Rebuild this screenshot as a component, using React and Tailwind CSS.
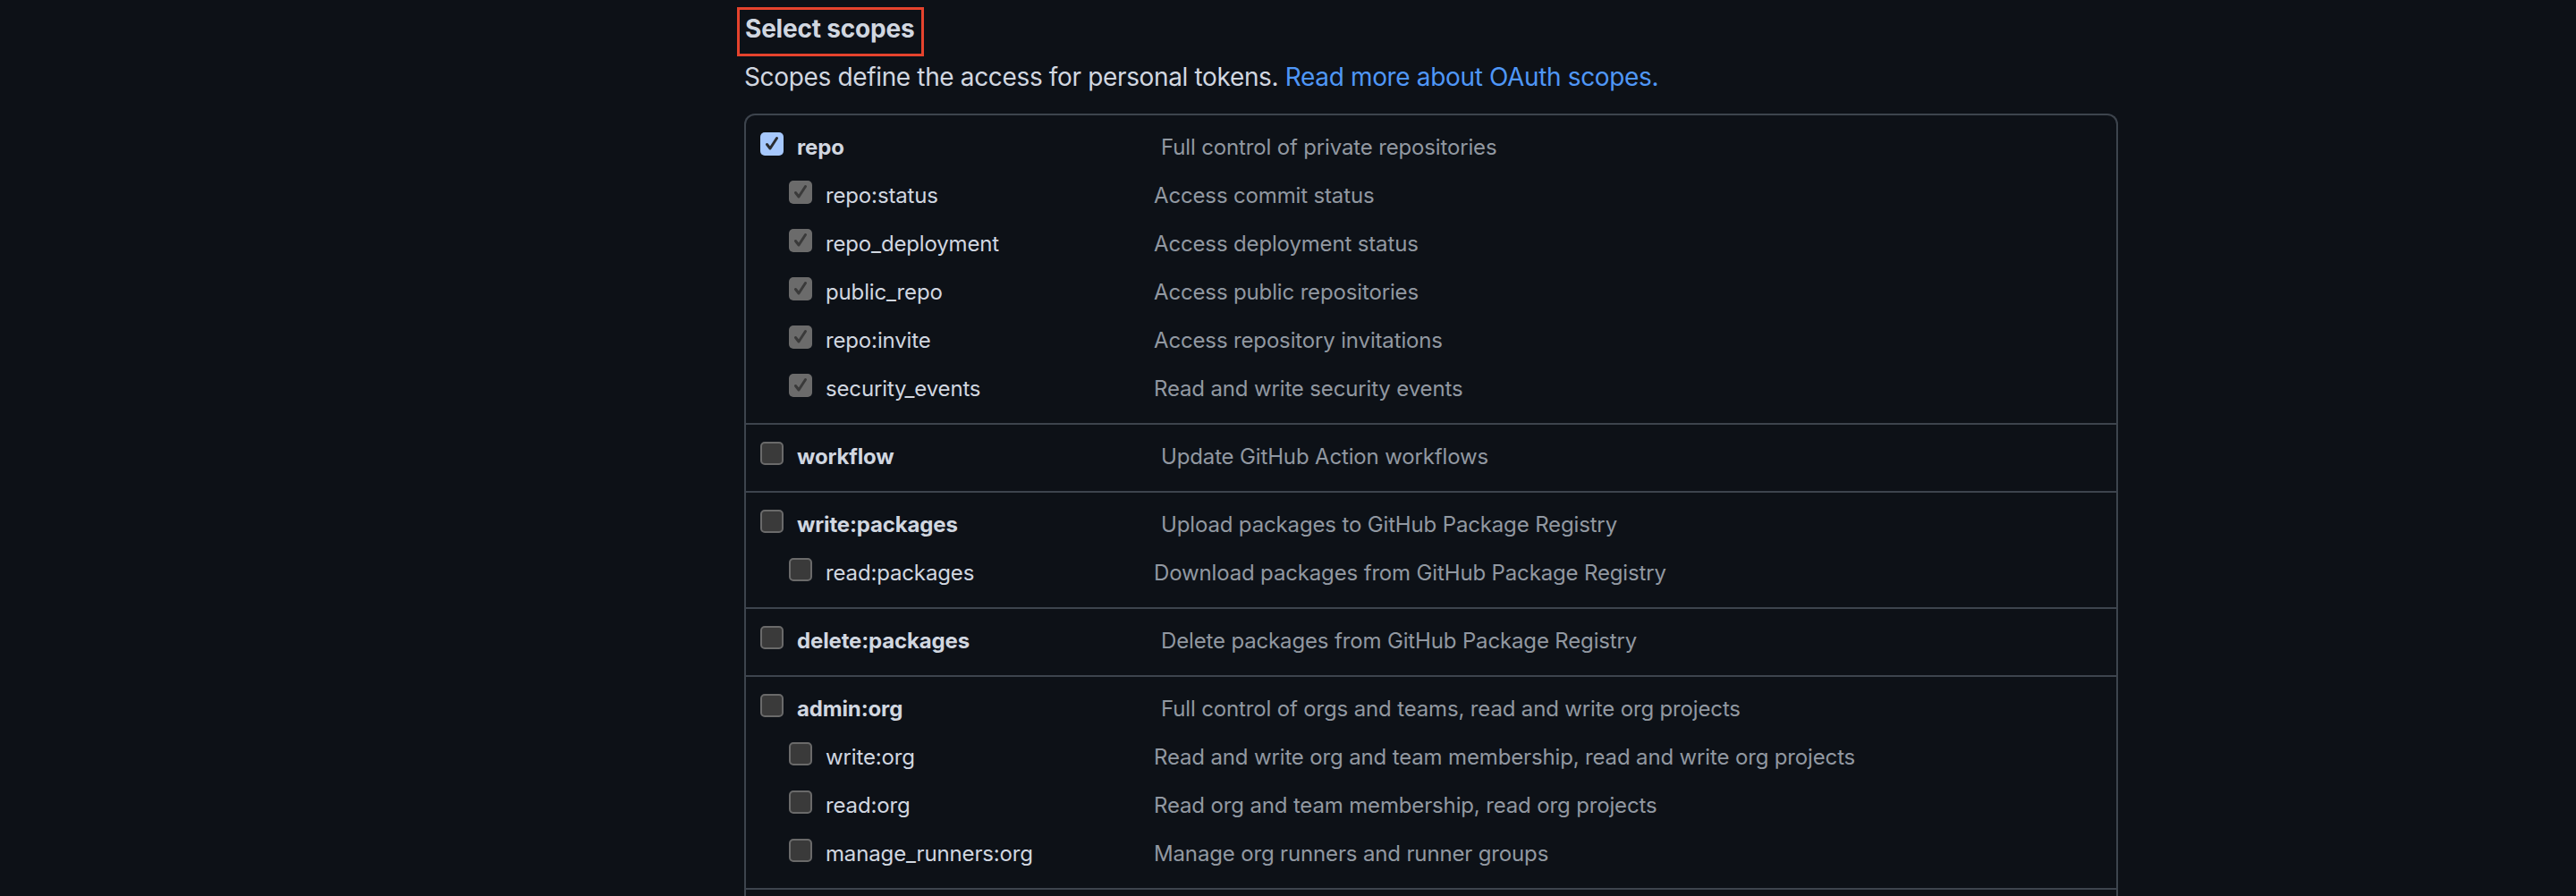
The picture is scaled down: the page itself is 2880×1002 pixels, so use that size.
import React from "react";

const groups = [
  {
    name: "repo",
    desc: "Full control of private repositories",
    checked: true,
    subs: [
      ["repo:status", "Access commit status"],
      ["repo_deployment", "Access deployment status"],
      ["public_repo", "Access public repositories"],
      ["repo:invite", "Access repository invitations"],
      ["security_events", "Read and write security events"],
    ],
  },
  { name: "workflow", desc: "Update GitHub Action workflows", subs: [] },
  {
    name: "write:packages",
    desc: "Upload packages to GitHub Package Registry",
    subs: [["read:packages", "Download packages from GitHub Package Registry"]],
  },
  { name: "delete:packages", desc: "Delete packages from GitHub Package Registry", subs: [] },
  {
    name: "admin:org",
    desc: "Full control of orgs and teams, read and write org projects",
    subs: [
      ["write:org", "Read and write org and team membership, read and write org projects"],
      ["read:org", "Read org and team membership, read org projects"],
      ["manage_runners:org", "Manage org runners and runner groups"],
    ],
  },
];

function Check({ state }) {
  if (state === "empty") {
    return (
      <div className="mt-[11px] h-[26px] w-[26px] shrink-0 rounded-[5px] border-2 border-[#6a6a6a] bg-[#3a3a3a]" />
    );
  }
  const bg = state === "blue" ? "bg-[#a6c8fd]" : "bg-[#6b6b6b]";
  const stroke = state === "blue" ? "#2a2c30" : "#3a3a3a";
  return (
    <div className={`mt-[11px] flex h-[26px] w-[26px] shrink-0 items-center justify-center rounded-[5px] ${bg}`}>
      <svg width="20" height="20" viewBox="0 0 20 20" fill="none">
        <path d="M4.5 10.5 L8 15 L15.5 3.5" stroke={stroke} strokeWidth="3" strokeLinecap="round" strokeLinejoin="round" />
      </svg>
    </div>
  );
}

export default function App() {
  return (
    <div className="h-[1002px] overflow-hidden bg-[#0d1117] font-[Inter,sans-serif] text-[28px] text-[#d1d7e0]">
      <div className="ml-[832px] w-[1536px] pt-[8px]">
        <div className="-ml-[8px] h-[55px] w-[209px] border-[3px] border-[#e5432d] pl-[6px]">
          <h2 className="text-[28px] font-bold leading-[42px] tracking-[-0.2px] text-[#d1d7e0]">Select scopes</h2>
        </div>
        <p className="mt-[2px] leading-[42px] tracking-[-0.35px]">
          Scopes define the access for personal tokens.{" "}
          <a className="text-[#4f97f7]">Read more about OAuth scopes.</a>
        </p>
        <div className="mt-[20px] rounded-t-[12px] border-2 border-b-0 border-[#3d444d]">
          {groups.map((g, i) => (
            <div key={g.name} className={`pb-[12px] pt-[8px] ${i > 0 ? "border-t-2 border-[#3d444d]" : ""}`}>
              <div className="flex h-[54px] items-start pl-[16px]">
                <Check state={g.checked ? "blue" : "empty"} />
                <div className="ml-[15px] w-[407px] shrink-0 pt-[1px] text-[24px] font-bold leading-[54px] tracking-[-0.15px] text-[#d1d7e0]">
                  {g.name}
                </div>
                <div className="pt-[1px] text-[24px] leading-[54px] tracking-[-0.15px] text-[#9198a1]">{g.desc}</div>
              </div>
              {g.subs.map(([n, d]) => (
                <div key={n} className="flex h-[54px] items-start pl-[48px]">
                  <Check state={g.checked ? "gray" : "empty"} />
                  <div className="ml-[15px] w-[367px] shrink-0 pt-[1px] text-[24px] leading-[54px] tracking-[-0.15px] text-[#d1d7e0]">
                    {n}
                  </div>
                  <div className="pt-[1px] text-[24px] leading-[54px] tracking-[-0.15px] text-[#9198a1]">{d}</div>
                </div>
              ))}
            </div>
          ))}
          <div className="h-[60px] border-t-2 border-[#3d444d]" />
        </div>
      </div>
    </div>
  );
}
